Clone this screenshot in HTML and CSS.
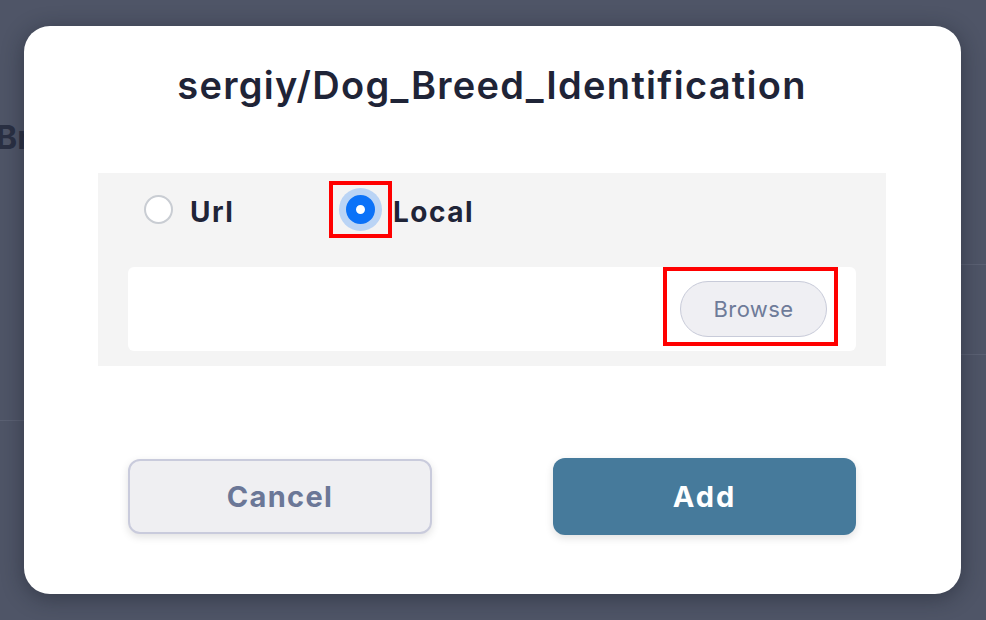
FILE: index.html
```html
<!DOCTYPE html>
<html lang="en">
<head>
<meta charset="utf-8">
<title>Add file</title>
<link rel="stylesheet" href="styles.css">
</head>
<body>
<div class="page">
  <div class="page-left">
    <h2 class="page-title">Breed Identification</h2>
  </div>
  <div class="page-right">
    <div class="row-a"></div>
    <div class="row-b"></div>
  </div>
</div>

<div class="modal">
  <h1 class="modal-title">sergiy/Dog_Breed_Identification</h1>
  <div class="panel">
    <div class="radios">
      <label class="radio-opt">
        <span class="radio"></span>
        <span class="radio-label">Url</span>
      </label>
      <label class="radio-opt local">
        <span class="mark mark-radio"><span class="radio checked"></span></span>
        <span class="radio-label">Local</span>
      </label>
    </div>
    <div class="file-box">
      <span class="mark mark-browse"><button class="browse" type="button">Browse</button></span>
    </div>
  </div>
  <div class="actions">
    <button class="btn btn-cancel" type="button">Cancel</button>
    <button class="btn btn-add" type="button">Add</button>
  </div>
</div>
</body>
</html>
```

FILE: styles.css
```css
* { box-sizing: border-box; }
html, body { margin: 0; padding: 0; }
body {
  width: 986px;
  height: 620px;
  overflow: hidden;
  background: #4f5567;
  font-family: "Inter", "Noto Sans", sans-serif;
  position: relative;
}
.page {
  display: grid;
  grid-template-columns: 500px 1fr;
  height: 620px;
}
.page-title {
  margin: 118px 0 0 -4px;
  font-size: 32px;
  font-weight: 700;
  color: #2a3043;
  white-space: nowrap;
}
.page-left { height: 421px; border-bottom: 1px solid #5b6173; }
.row-a { height: 265px; border-bottom: 1px solid #5b6173; }
.row-b { height: 90px; border-bottom: 1px solid #5b6173; }

.modal {
  position: absolute;
  left: 24px;
  top: 26px;
  width: 937px;
  height: 568px;
  background: #ffffff;
  border-radius: 26px;
  box-shadow: 0 4px 22px rgba(20, 24, 36, 0.45);
  padding: 0 75px 0 74px;
  display: flex;
  flex-direction: column;
}
.modal-title {
  margin: 36px -20px 0;
  height: 47px;
  line-height: 47px;
  text-align: center;
  font-size: 38px;
  font-weight: 600;
  color: #1f2437;
  letter-spacing: 1.3px;
  white-space: nowrap;
}
.panel {
  margin-top: 64px;
  background: #f4f4f4;
  height: 193px;
  padding: 8px 30px 15px;
}
.radios {
  display: flex;
  align-items: center;
  height: 57px;
  margin-bottom: 29px;
}
.radio-opt {
  display: flex;
  align-items: center;
}
.radio-opt:first-child {
  margin-left: 16px;
  width: 185px;
}
.radio {
  width: 29px;
  height: 29px;
  border-radius: 50%;
  border: 2px solid #c9cdd3;
  background: #ffffff;
  display: inline-block;
}
.radio.checked {
  border: 10px solid #0b72f8;
  background: #ffffff;
  box-shadow: 0 0 0 7px rgba(11, 114, 248, 0.25);
}
.radio-label {
  margin-left: 17px;
  padding-top: 4px;
  font-size: 28px;
  font-weight: 700;
  color: #1f2437;
  letter-spacing: 1.5px;
}
.local .radio-label { margin-left: 1px; }
.mark {
  display: inline-flex;
  border: 4px solid #ff0000;
}
.mark-radio {
  padding: 10px 13px 10px 13px;
}
.file-box {
  background: #ffffff;
  border-radius: 6px;
  height: 84px;
  display: flex;
  justify-content: flex-end;
  align-items: flex-start;
  padding-right: 18px;
}
.mark-browse {
  padding: 10px 7px 5px 13px;
}
.browse {
  width: 147px;
  height: 56px;
  border-radius: 28px;
  border: 1.5px solid #c8cbd9;
  background: #efeff3;
  color: #6e7b99;
  font-family: "Inter", "Noto Sans", sans-serif;
  font-size: 22px;
  font-weight: 400;
  letter-spacing: 0.4px;
  padding: 0;
}
.actions {
  margin-top: 92px;
  padding: 0 30px;
  display: flex;
  justify-content: space-between;
  align-items: center;
}
.btn {
  width: 304px;
  height: 76px;
  border-radius: 12px;
  font-family: "Inter", "Noto Sans", sans-serif;
  font-size: 29px;
  font-weight: 700;
  padding: 0;
  box-shadow: 0 3px 8px rgba(0, 0, 0, 0.12);
}
.btn-cancel {
  height: 75px;
  background: #efeff2;
  border: 2px solid #c9cbdc;
  color: #6b7797;
  letter-spacing: 1.3px;
}
.btn-add {
  width: 303px;
  height: 77px;
  background: #467a9b;
  border: 0;
  color: #ffffff;
  letter-spacing: 2px;
}
```
